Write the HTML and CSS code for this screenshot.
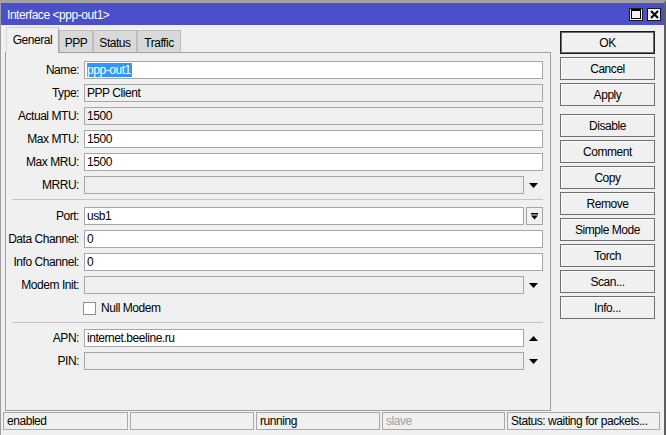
FILE: index.html
```html
<!DOCTYPE html>
<html>
<head>
<meta charset="utf-8">
<link rel="stylesheet" href="styles.css">
</head>
<body>
<div class="window">
  <div class="titlebar">
    <span class="title">Interface &lt;ppp-out1&gt;</span>
    <div class="tb-btns">
      <span class="tb-btn"><svg width="10" height="10" viewBox="0 0 10 10"><rect x="0.5" y="0.5" width="9" height="9" fill="none" stroke="#000" stroke-width="1"/><rect x="0" y="0" width="10" height="2" fill="#000"/></svg></span>
      <span class="tb-btn"><svg width="9" height="9" viewBox="0 0 9 9"><path d="M1 1L8 8M8 1L1 8" stroke="#000" stroke-width="2"/></svg></span>
    </div>
  </div>
  <div class="body">
    <div class="main">
      <div class="tabs">
        <div class="tab active tab-general">General</div>
        <div class="tab tab-ppp">PPP</div>
        <div class="tab tab-status">Status</div>
        <div class="tab tab-traffic">Traffic</div>
      </div>
      <div class="panel">
        <div class="rows">
          <div class="row"><label class="lbl">Name:</label><div class="field"><span class="sel">ppp-out1</span></div></div>
          <div class="row"><label class="lbl">Type:</label><div class="field ro">PPP Client</div></div>
          <div class="row"><label class="lbl">Actual MTU:</label><div class="field ro">1500</div></div>
          <div class="row"><label class="lbl">Max MTU:</label><div class="field">1500</div></div>
          <div class="row"><label class="lbl">Max MRU:</label><div class="field">1500</div></div>
          <div class="row"><label class="lbl">MRRU:</label><div class="field ro"></div><span class="arrow"><svg width="9" height="5" viewBox="0 0 9 5"><path d="M0 0H9L4.5 5Z"/></svg></span></div>
        </div>
        <div class="sep"></div>
        <div class="rows">
          <div class="row"><label class="lbl">Port:</label><div class="field">usb1</div><span class="arrow-btn"><svg width="7" height="7" viewBox="0 0 7 7"><rect x="0" y="0" width="7" height="1.5"/><path d="M0 2.5H7L3.5 6.5Z"/></svg></span></div>
          <div class="row"><label class="lbl">Data Channel:</label><div class="field">0</div></div>
          <div class="row"><label class="lbl">Info Channel:</label><div class="field">0</div></div>
          <div class="row"><label class="lbl">Modem Init:</label><div class="field ro"></div><span class="arrow"><svg width="9" height="5" viewBox="0 0 9 5"><path d="M0 0H9L4.5 5Z"/></svg></span></div>
          <div class="row check-row"><span class="checkbox"></span><span class="check-lbl">Null Modem</span></div>
        </div>
        <div class="sep sep2"></div>
        <div class="rows">
          <div class="row"><label class="lbl">APN:</label><div class="field">internet.beeline.ru</div><span class="arrow"><svg width="9" height="5" viewBox="0 0 9 5"><path d="M0 5H9L4.5 0Z"/></svg></span></div>
          <div class="row"><label class="lbl">PIN:</label><div class="field ro"></div><span class="arrow"><svg width="9" height="5" viewBox="0 0 9 5"><path d="M0 0H9L4.5 5Z"/></svg></span></div>
        </div>
      </div>
    </div>
    <div class="btns">
      <div class="btn default">OK</div>
      <div class="btn">Cancel</div>
      <div class="btn">Apply</div>
      <div class="btn group">Disable</div>
      <div class="btn">Comment</div>
      <div class="btn">Copy</div>
      <div class="btn">Remove</div>
      <div class="btn">Simple Mode</div>
      <div class="btn">Torch</div>
      <div class="btn">Scan...</div>
      <div class="btn">Info...</div>
    </div>
  </div>
  <div class="statusbar">
    <div class="seg s1">enabled</div>
    <div class="seg s2"></div>
    <div class="seg s3">running</div>
    <div class="seg s4 dim">slave</div>
    <div class="seg s5">Status: waiting for packets...</div>
  </div>
</div>
</body>
</html>
```

FILE: styles.css
```css
html, body {
  margin: 0;
  padding: 0;
}
body {
  font-family: "Liberation Sans", Arial, sans-serif;
  font-size: 12px;
  letter-spacing: -0.45px;
  color: #000;
  background: #f0f0f0;
}
.window {
  width: 666px;
  height: 435px;
  box-sizing: border-box;
  border-top: 3px solid #a3a3a3;
  border-left: 1px solid #9d9d9d;
  border-right: 2px solid #5f5f5f;
  background: #f0f0f0;
  display: flex;
  flex-direction: column;
}
.titlebar {
  height: 22px;
  flex: none;
  background: #4b4fc9;
  color: #fff;
  display: flex;
  align-items: center;
  padding: 0 3px 0 6px;
}
.title {
  line-height: 22px;
  padding-top: 1px;
}
.tb-btns {
  margin-left: auto;
  display: flex;
  gap: 4px;
}
.tb-btn {
  width: 14px;
  height: 13px;
  box-sizing: border-box;
  border: 1px solid #1a1a1a;
  background: #f0f0f0;
  display: flex;
  align-items: center;
  justify-content: center;
}
.tb-btn svg {
  display: block;
}
.body {
  height: 386px;
  flex: none;
  display: flex;
  padding: 2px 0 0 4px;
  box-sizing: border-box;
}
.main {
  width: 546px;
  display: flex;
  flex-direction: column;
}
.tabs {
  display: flex;
  height: 25px;
  padding-left: 1px;
  flex: none;
}
.tab {
  box-sizing: border-box;
  height: 22px;
  margin-top: 3px;
  background: #d9d9d9;
  border: 1px solid #bdbdbd;
  border-bottom: none;
  display: flex;
  align-items: center;
  justify-content: center;
  padding-top: 2px;
}
.tab.active {
  height: 26px;
  margin-top: 0;
  background: #f0f0f0;
  border-color: #d4d4d4 #a9a9a9 #f0f0f0 #dcdcdc;
  position: relative;
  z-index: 1;
  padding-top: 0;
  padding-bottom: 2px;
}
.tab-general { width: 53px; }
.tab-ppp { width: 34px; }
.tab-status { width: 44px; }
.tab-traffic { width: 44px; }
.panel {
  flex: 1;
  border: 1px solid #a0a0a0;
  padding: 8px 7px 0 0;
}
.rows {
  display: flex;
  flex-direction: column;
  gap: 5px;
}
.row {
  display: flex;
  align-items: center;
  height: 18px;
}
.lbl {
  width: 73px;
  text-align: right;
  margin-right: 5px;
  flex: none;
  white-space: nowrap;
}
.field {
  flex: 1;
  height: 18px;
  box-sizing: border-box;
  border: 1px solid #a6a6a6;
  background: #fff;
  padding: 0 2px;
  line-height: 16px;
  white-space: nowrap;
  overflow: hidden;
}
.field.ro {
  background: #f0f0f0;
}
.sel {
  background: #3297fd;
  color: #fff;
  display: inline-block;
  line-height: 14px;
  padding: 0 1px 0 0;
  vertical-align: middle;
  margin-top: -2px;
}
.arrow {
  width: 19px;
  flex: none;
  display: flex;
  justify-content: center;
  align-items: center;
}
.arrow svg, .arrow-btn svg {
  display: block;
}
.arrow-btn {
  width: 17px;
  height: 18px;
  margin-left: 2px;
  box-sizing: border-box;
  border: 1px solid #a6a6a6;
  background: #f0f0f0;
  display: flex;
  justify-content: center;
  align-items: center;
  flex: none;
}
.sep {
  height: 1px;
  background: #c4c4c4;
  margin: 5px 0 7px 6px;
}
.sep2 {
  margin-bottom: 6px;
}
.check-row {
  padding-left: 77px;
}
.checkbox {
  width: 13px;
  height: 13px;
  box-sizing: border-box;
  border: 1px solid #8e8e8e;
  background: #fff;
  flex: none;
}
.check-lbl {
  margin-left: 5px;
}
.btns {
  width: 95px;
  margin-left: 9px;
  margin-top: 4px;
  display: flex;
  flex-direction: column;
  gap: 3px;
}
.btn {
  height: 23px;
  box-sizing: border-box;
  border: 1px solid #707070;
  box-shadow: inset 1px 1px 0 #fbfbfb;
  background: #f0f0f0;
  display: flex;
  align-items: center;
  justify-content: center;
}
.btn.default {
  border-color: #1b1b1b;
  box-shadow: inset 0 0 0 1px #6b6b6b;
}
.btn.group {
  margin-top: 5px;
}
.statusbar {
  height: 18px;
  flex: none;
  margin: 1px 0 5px 0;
  padding: 0 4px 0 2px;
  display: flex;
  gap: 2px;
}
.seg {
  box-sizing: border-box;
  height: 18px;
  border: 1px solid #a8a8a8;
  padding-left: 3px;
  line-height: 16px;
  white-space: nowrap;
}
.s1 { width: 125px; }
.s2 { width: 124px; }
.s3 { width: 124px; }
.s4 { width: 123px; }
.s5 { flex: 1; }
.dim { color: #a0a0a0; }
```
